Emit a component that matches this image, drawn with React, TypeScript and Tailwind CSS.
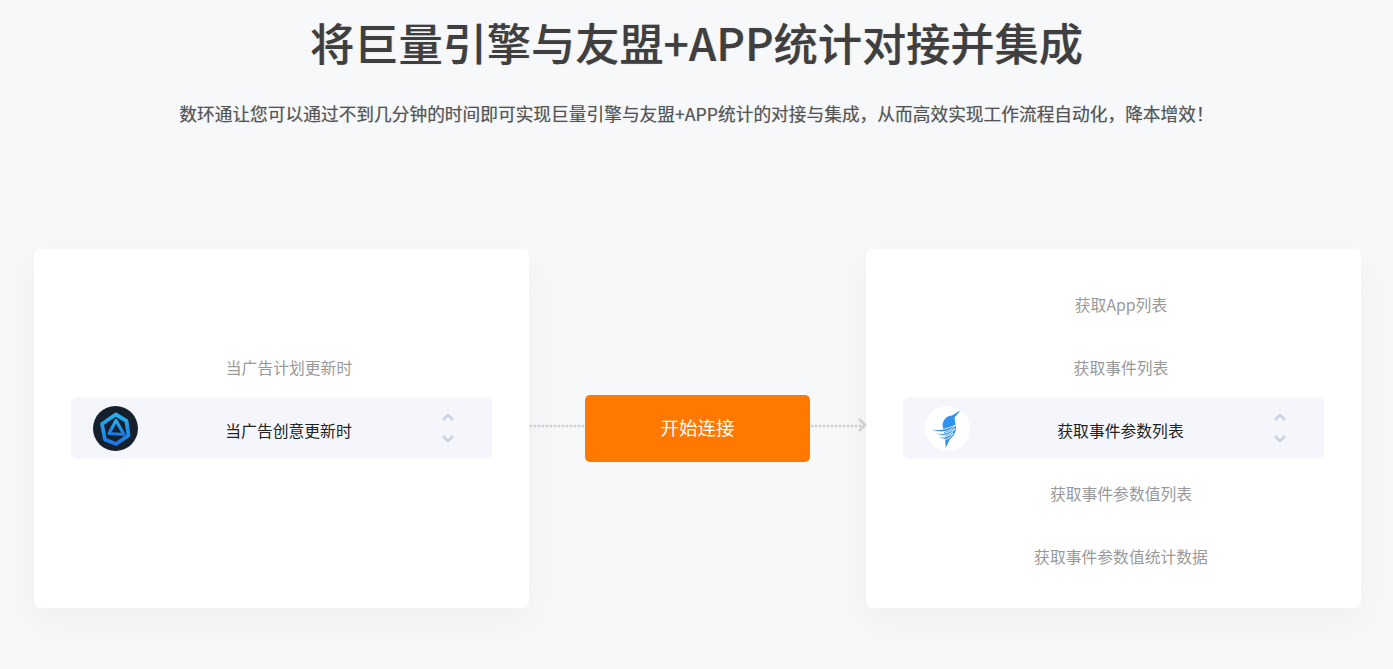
const font = { fontFamily: '"Noto Sans CJK SC", sans-serif' };

function LeftLogo() {
  return (
    <svg viewBox="0 0 45 45" className="w-[45px] h-[45px] shrink-0">
      <defs>
        <linearGradient id="lg" x1="0" y1="0" x2="0" y2="1">
          <stop offset="0" stopColor="#27b0f0" />
          <stop offset="1" stopColor="#1c78e2" />
        </linearGradient>
      </defs>
      <circle cx="22.5" cy="22.5" r="22.5" fill="#16202c" />
      <path d="M22.7 8.5 L33.5 15 L35.5 29.5 L23 38 L12 33.5 L9 18 Z" fill="none" stroke="url(#lg)" strokeWidth="3.8" strokeLinejoin="round" />
      <path d="M23 14.5 L31 28.5 L16 27.5 Z" fill="none" stroke="url(#lg)" strokeWidth="3.2" strokeLinejoin="round" />
    </svg>
  );
}

function RightLogo() {
  return (
    <svg viewBox="0 0 45 45" className="w-[45px] h-[45px] shrink-0">
      <circle cx="22.5" cy="22.5" r="22.5" fill="#fff" />
      <path d="M35.7 4.3 L29.5 11.5 L31 22 C30.5 28 27.5 31 25 33 L20.7 41.7 L20 31 L17.5 19 C18.5 13 22 9.5 27 9.5 Z" fill="#2f92ec" />
      <path d="M5.7 23.3 C13 24 21 24 30.5 19 C26 26 15 28 5.7 23.3 Z" fill="#2f92ec" stroke="#fff" strokeWidth="0.8" />
      <path d="M9.5 26.5 C16 28.5 23 27.5 30 22.5 C26 30 17 32 9.5 26.5 Z" fill="#4aa3ef" stroke="#fff" strokeWidth="0.8" />
      <path d="M13.5 30.5 C18 32 23 31 28 27 C25 34 19 35 13.5 30.5 Z" fill="#2f92ec" stroke="#fff" strokeWidth="0.8" />
    </svg>
  );
}

function Chevrons() {
  return (
    <div className="flex flex-col gap-[14px] items-center">
      <svg viewBox="0 0 12 8" className="w-[12px] h-[8px]">
        <path d="M1 7 L6 2 L11 7" fill="none" stroke="#cdd3e4" strokeWidth="2.8" />
      </svg>
      <svg viewBox="0 0 12 8" className="w-[12px] h-[8px]">
        <path d="M1 1 L6 6 L11 1" fill="none" stroke="#cdd3e4" strokeWidth="2.8" />
      </svg>
    </div>
  );
}

function Item({ text }: { text: string }) {
  return (
    <div className="h-[63px] flex items-center justify-center pl-[15px] pt-[5px] text-[15.8px] text-[#999999]">{text}</div>
  );
}

function Active({ text, logo }: { text: string; logo: React.ReactNode }) {
  return (
    <div className="h-[62px] mb-[1px] bg-[#f5f6fc] rounded-[6px] flex items-center pl-[22px] pr-[38px]">
      {logo}
      <div className="flex-1 text-center text-[15.8px] text-[#222222] pt-[6px] pr-[3px]">{text}</div>
      <Chevrons />
    </div>
  );
}

function Dots() {
  return (
    <div className="flex-1 h-[4px] mb-[5px] bg-[radial-gradient(circle,#d0d1d4_1.3px,transparent_1.7px)] bg-[length:4px_4px]" />
  );
}

export default function App() {
  return (
    <div style={font} className="w-[1393px] h-[669px] overflow-hidden bg-[#f7f8fa] flex flex-col">
      <h1 className="mt-[12px] h-[60px] leading-[60px] text-center text-[44.2px] font-medium text-[#3f3f3f] [text-shadow:0.4px_0.4px_1px_rgba(0,0,0,0.3)]">
        将巨量引擎与友盟+APP统计对接并集成
      </h1>
      <p className="mt-[27px] h-[28px] leading-[28px] text-center text-[17.72px] text-[#555555] [text-shadow:0_0_1px_rgba(0,0,0,0.3)]">
        数环通让您可以通过不到几分钟的时间即可实现巨量引擎与友盟+APP统计的对接与集成，从而高效实现工作流程自动化，降本增效！
      </p>
      <div className="mt-[122px] pr-[32px] flex items-center justify-between pl-[34px]">
        <div className="w-[495px] h-[359px] bg-white rounded-[6px] shadow-[0_12px_40px_rgba(0,0,0,0.045)] px-[37px] flex flex-col pt-[85px]">
          <Item text="当广告计划更新时" />
          <Active text="当广告创意更新时" logo={<LeftLogo />} />
        </div>
        <div className="flex-1 flex items-center">
          <Dots />
          <button className="w-[225px] h-[67px] pb-[2px] bg-[#ff7800] rounded-[5px] text-white text-[18.5px]">开始连接</button>
          <div className="flex-1 flex items-center relative">
            <Dots />
            <svg viewBox="0 0 10 14" className="w-[10px] h-[14px] absolute right-[-1px] top-[-6px]">
              <path d="M2 1 L8 7 L2 13" fill="none" stroke="#d0d1d4" strokeWidth="2.6" />
            </svg>
          </div>
        </div>
        <div className="w-[495px] h-[359px] bg-white rounded-[6px] shadow-[0_12px_40px_rgba(0,0,0,0.045)] px-[37px] flex flex-col pt-[22px]">
          <Item text="获取App列表" />
          <Item text="获取事件列表" />
          <Active text="获取事件参数列表" logo={<RightLogo />} />
          <Item text="获取事件参数值列表" />
          <Item text="获取事件参数值统计数据" />
        </div>
      </div>
    </div>
  );
}
